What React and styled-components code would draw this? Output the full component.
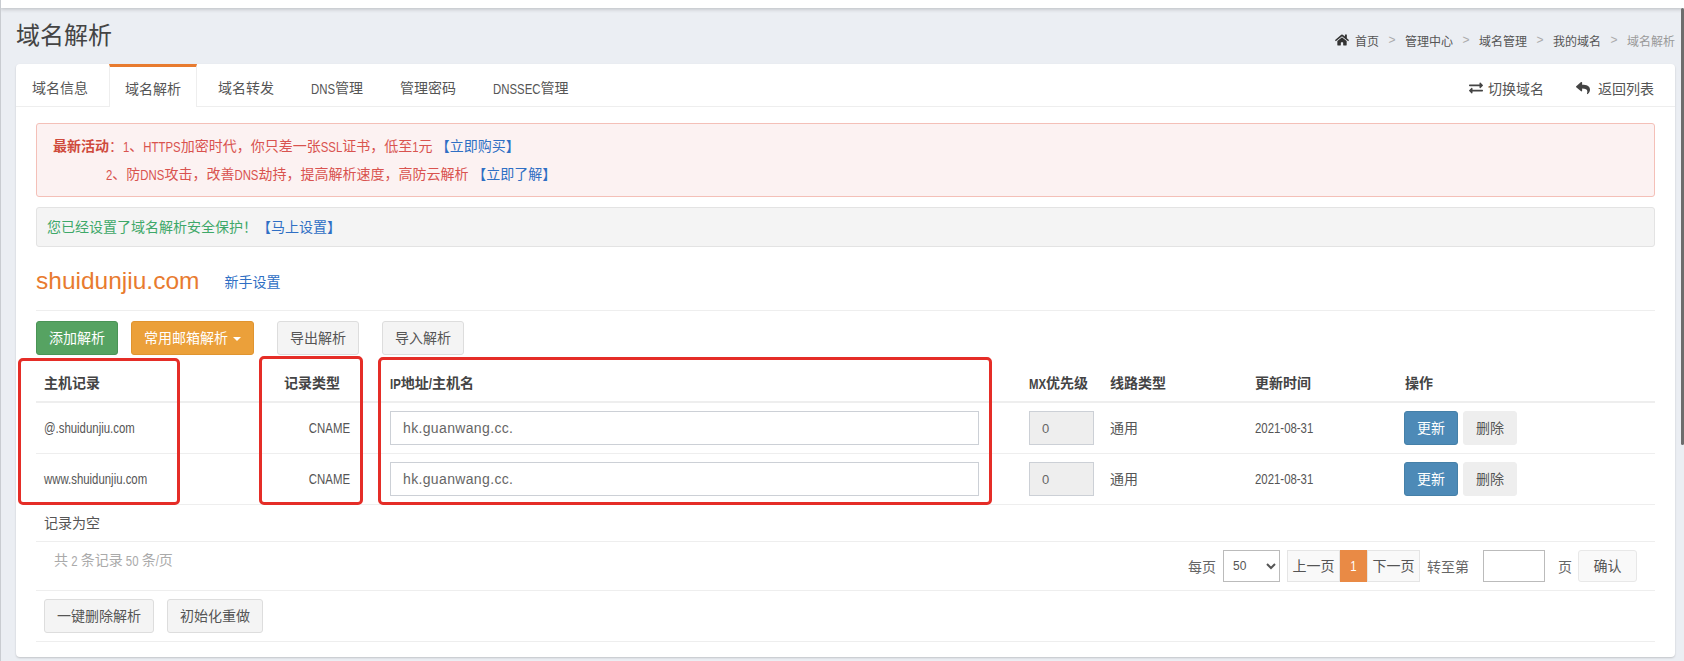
import React from 'react';
import styled, { createGlobalStyle } from 'styled-components';
import { FaHome, FaExchangeAlt, FaReply } from 'react-icons/fa';

const GlobalStyle = createGlobalStyle`
  html, body {
    margin: 0;
    padding: 0;
    height: 100%;
    overflow: hidden;
    background: #ebeef3;
    font-family: "Liberation Sans", "Noto Sans CJK SC", sans-serif;
    font-size: 14px;
    color: #555;
  }
  * { box-sizing: border-box; }
`;

const Page = styled.div`
  position: relative;
  width: 1684px;
  height: 661px;
  overflow: hidden;
  border-left: 1px solid #c9ccd1;
`;

const TopBar = styled.div`
  height: 8px;
  margin-left: -1px;
  background: #fff;
  box-shadow: 0 1px 4px rgba(0, 0, 0, 0.22);
`;

const Scrollbar = styled.div`
  position: absolute;
  top: 8px;
  right: 0;
  width: 3px;
  height: 437px;
  border-radius: 2px;
  background: #6d6d6d;
`;

const Header = styled.div`
  display: flex;
  justify-content: space-between;
  height: 56px;
  padding: 0 9px 0 15px;
`;

const Title = styled.h1`
  margin: 9px 0 0;
  font-size: 24px;
  line-height: 38px;
  font-weight: 400;
  color: #444;
`;

const Crumbs = styled.div`
  display: flex;
  align-items: center;
  height: 16px;
  margin: 24px 0 0;
  font-size: 12px;
  color: #555;

  svg {
    font-size: 14px;
    margin-right: 6px;
    color: #333;
  }
`;

const CrumbSep = styled.span`
  width: 26px;
  text-align: center;
  color: #aaa;
`;

const CrumbLast = styled.span`
  color: #999;
`;

const Card = styled.div`
  width: 1659px;
  height: 593px;
  margin-left: 15px;
  background: #fff;
  border-radius: 4px;
  box-shadow: 0 1px 2px rgba(0, 0, 0, 0.18);
`;

const TabBar = styled.div`
  display: flex;
  justify-content: space-between;
  height: 43px;
  border-bottom: 1px solid #eee;
`;

const TabList = styled.div`
  display: flex;
  gap: 5px;
`;

const Tab = styled.div`
  height: 43px;
  padding: 0 16px;
  line-height: ${({ $active }) => ($active ? '45px' : '48px')};
  color: #555;
  ${({ $active }) =>
    $active &&
    `
    background: #fff;
    border-top: 3px solid #e87b2f;
    border-left: 1px solid #eee;
    border-right: 1px solid #eee;
    padding: 0 15px;
  `}
`;

const TabTools = styled.div`
  display: flex;
  align-items: center;
  gap: 32px;
  padding: 5px 21px 0 0;
`;

const TabTool = styled.div`
  display: flex;
  align-items: center;
  gap: ${({ $gap }) => $gap}px;
  color: #555;

  svg {
    font-size: 14px;
    color: #444;
  }
`;

const Body = styled.div`
  padding: 16px 20px 0;
`;

const Narrow = styled.span`
  display: inline-block;
  font-size: 11.4px;
  line-height: 1;
  white-space: pre;
  transform: scaleY(1.23);
`;

const AlertRed = styled.div`
  height: 74px;
  padding: 8px 15px 0 16px;
  background: #fcf2f2;
  border: 1px solid #f4c0b8;
  border-radius: 3px;
  color: #d9534f;
  line-height: 28px;
`;

const AlertLine = styled.div`
  padding-left: ${({ $indent }) => $indent || 0}px;
`;

const Strong = styled.b`
  font-weight: 700;
  color: #cf4a3c;
`;

const Link = styled.a`
  color: #2f6fc4;
`;

const AlertGrey = styled.div`
  height: 40px;
  margin-top: 10px;
  padding: 0 10px;
  background: #f4f4f4;
  border: 1px solid #e3e3e3;
  border-radius: 3px;
  line-height: 38px;
  color: #3ea869;
`;

const DomainRow = styled.div`
  display: flex;
  align-items: center;
  gap: 25px;
  height: 64px;
  padding-top: 5px;
  border-bottom: 1px solid #eee;
`;

const Domain = styled.span`
  font-size: 24.5px;
  color: #e87b2f;
`;

const Toolbar = styled.div`
  display: flex;
  margin-top: 10px;
`;

const Button = styled.button`
  height: 34px;
  padding: 0 12px 2px;
  margin-right: ${({ $mr }) => $mr || 0}px;
  border: 1px solid ${({ $border }) => $border || '#ddd'};
  border-radius: 3px;
  background: ${({ $bg }) => $bg || '#f4f4f4'};
  color: ${({ $color }) => $color || '#555'};
  font: inherit;
`;

const Caret = styled.span`
  display: inline-block;
  margin-left: 5px;
  vertical-align: middle;
  border-top: 4px solid #fff;
  border-left: 4px solid transparent;
  border-right: 4px solid transparent;
`;

const TableWrap = styled.div`
  position: relative;
`;

const Mark = styled.div`
  position: absolute;
  top: ${({ $top }) => $top}px;
  left: ${({ $left }) => $left}px;
  width: ${({ $w }) => $w}px;
  height: ${({ $h }) => $h}px;
  border: 3px solid #e52d27;
  border-radius: 5px;
  pointer-events: none;
`;

const Table = styled.table`
  width: 1619px;
  table-layout: fixed;
  border-collapse: separate;
  border-spacing: 0;
`;

const Th = styled.th`
  height: 48px;
  padding: 7px ${({ $pr }) => $pr || 8}px 0 8px;
  border-bottom: 2px solid #eee;
  text-align: ${({ $right }) => ($right ? 'right' : 'left')};
  font-weight: 700;
  color: #444;
`;

const Td = styled.td`
  height: 51px;
  padding: 0 ${({ $pr }) => $pr || 8}px 2px 8px;
  border-bottom: 1px solid #eee;
  text-align: ${({ $right }) => ($right ? 'right' : 'left')};
  color: #555;
`;

const TextInput = styled.input`
  display: block;
  width: ${({ $w }) => $w}px;
  height: 34px;
  margin-top: 2px;
  padding: 0 12px;
  border: 1px solid #ccd0d6;
  background: ${({ $off }) => ($off ? '#eee' : '#fff')};
  color: #666;
  font: inherit;
  font-size: ${({ $fs }) => $fs || 14}px;
  letter-spacing: ${({ $ls }) => $ls || 0}px;
  outline: none;
`;

const ActionCell = styled.div`
  display: flex;
  gap: 5px;
  margin: 2px 0 0 -1px;
`;

const SmallButton = styled.button`
  width: ${({ $w }) => $w}px;
  height: 34px;
  padding: 0 0 2px;
  border: 1px solid ${({ $primary }) => ($primary ? '#4580a8' : '#eee')};
  border-radius: 3px;
  background: ${({ $primary }) => ($primary ? '#4d8ab7' : '#eee')};
  color: ${({ $primary }) => ($primary ? '#fff' : '#555')};
  font: inherit;
`;

const EmptyRow = styled.div`
  height: 37px;
  padding: 0 8px;
  border-bottom: 1px solid #eee;
  line-height: 36px;
  color: #555;
`;

const PagerRow = styled.div`
  display: flex;
  justify-content: space-between;
  height: 49px;
  padding: 8px 18px 0 18px;
  border-bottom: 1px solid #eee;
`;

const Total = styled.div`
  color: #aaa;
  line-height: 20px;
`;

const PagerTools = styled.div`
  display: flex;
  align-items: center;
  height: 32px;
  color: #666;
`;

const PageSize = styled.select`
  width: 57px;
  height: 32px;
  margin: 0 7px;
  padding-left: 5px;
  border: 1px solid #bbb;
  background: #fff;
  color: #555;
  font: inherit;
  font-size: 12px;
`;

const PageBtn = styled.div`
  width: ${({ $w }) => $w}px;
  height: 32px;
  border: ${({ $active }) => ($active ? 'none' : '1px solid #e5e5e5')};
  background: ${({ $active }) => ($active ? '#e98a45' : '#f9f9f9')};
  color: ${({ $active }) => ($active ? '#fff' : '#555')};
  text-align: center;
  line-height: 30px;
`;

const JumpLabel = styled.span`
  margin-left: ${({ $ml }) => $ml || 0}px;
`;

const JumpInput = styled.input`
  width: 62px;
  height: 32px;
  margin-left: 14px;
  border: 1px solid #bbb;
  background: #fff;
  outline: none;
`;

const Confirm = styled.div`
  width: 59px;
  height: 32px;
  margin-left: 6px;
  border: 1px solid #e8e8e8;
  border-radius: 3px;
  background: #f9f9f9;
  color: #555;
  text-align: center;
  line-height: 30px;
`;

const BottomRow = styled.div`
  display: flex;
  gap: 13px;
  height: 51px;
  padding: 8px 8px 0;
  border-bottom: 1px solid #eee;
`;

const records = ['@.shuidunjiu.com', 'www.shuidunjiu.com'];

const App = () => {
  return (
    <Page>
      <GlobalStyle />
      <TopBar />
      <Scrollbar />
      <Header>
        <Title>域名解析</Title>
        <Crumbs>
          <FaHome />
          首页
          <CrumbSep>&gt;</CrumbSep>
          管理中心
          <CrumbSep>&gt;</CrumbSep>
          域名管理
          <CrumbSep>&gt;</CrumbSep>
          我的域名
          <CrumbSep>&gt;</CrumbSep>
          <CrumbLast>域名解析</CrumbLast>
        </Crumbs>
      </Header>
      <Card>
        <TabBar>
          <TabList>
            <Tab>域名信息</Tab>
            <Tab $active>域名解析</Tab>
            <Tab>域名转发</Tab>
            <Tab><Narrow>DNS</Narrow>管理</Tab>
            <Tab>管理密码</Tab>
            <Tab><Narrow>DNSSEC</Narrow>管理</Tab>
          </TabList>
          <TabTools>
            <TabTool $gap={5}><FaExchangeAlt />切换域名</TabTool>
            <TabTool $gap={8}><FaReply />返回列表</TabTool>
          </TabTools>
        </TabBar>
        <Body>
          <AlertRed>
            <AlertLine>
              <Strong>最新活动</Strong>：<Narrow>1</Narrow>、<Narrow>HTTPS</Narrow>加密时代，你只差一张<Narrow>SSL</Narrow>证书，低至<Narrow>1</Narrow>元<Narrow> </Narrow><Link>【立即购买】</Link>
            </AlertLine>
            <AlertLine $indent={53}>
              <Narrow>2</Narrow>、防<Narrow>DNS</Narrow>攻击，改善<Narrow>DNS</Narrow>劫持，提高解析速度，高防云解析 <Link>【立即了解】</Link>
            </AlertLine>
          </AlertRed>
          <AlertGrey>
            您已经设置了域名解析安全保护！<Link>【马上设置】</Link>
          </AlertGrey>
          <DomainRow>
            <Domain>shuidunjiu.com</Domain>
            <Link>新手设置</Link>
          </DomainRow>
          <Toolbar>
            <Button $bg="#56a362" $border="#4a9456" $color="#fff" $mr={13}>添加解析</Button>
            <Button $bg="#eba03a" $border="#e0942f" $color="#fff" $mr={23}>常用邮箱解析<Caret /></Button>
            <Button $mr={23}>导出解析</Button>
            <Button>导入解析</Button>
          </Toolbar>
          <TableWrap>
            <Table>
              <colgroup>
                <col width="204" />
                <col width="142" />
                <col width="639" />
                <col width="81" />
                <col width="145" />
                <col width="150" />
                <col width="258" />
              </colgroup>
              <thead>
                <tr>
                  <Th>主机记录</Th>
                  <Th $right $pr={42}>记录类型</Th>
                  <Th><Narrow>IP</Narrow>地址<Narrow>/</Narrow>主机名</Th>
                  <Th><Narrow>MX</Narrow>优先级</Th>
                  <Th>线路类型</Th>
                  <Th>更新时间</Th>
                  <Th>操作</Th>
                </tr>
              </thead>
              <tbody>
                {records.map((host) => (
                  <tr key={host}>
                    <Td><Narrow>{host}</Narrow></Td>
                    <Td $right $pr={32}><Narrow>CNAME</Narrow></Td>
                    <Td><TextInput $w={589} $ls={0.35} readOnly value="hk.guanwang.cc." /></Td>
                    <Td><TextInput $w={65} $off $fs={13} readOnly value="0" /></Td>
                    <Td>通用</Td>
                    <Td><Narrow>2021-08-31</Narrow></Td>
                    <Td>
                      <ActionCell>
                        <SmallButton $w={54} $primary>更新</SmallButton>
                        <SmallButton $w={54}>删除</SmallButton>
                      </ActionCell>
                    </Td>
                  </tr>
                ))}
              </tbody>
            </Table>
            <Mark $left={-18} $top={3} $w={162} $h={147} />
            <Mark $left={223} $top={1} $w={104} $h={149} />
            <Mark $left={342} $top={2} $w={614} $h={148} />
          </TableWrap>
          <EmptyRow>记录为空</EmptyRow>
          <PagerRow>
            <Total>共<Narrow> 2 </Narrow>条记录<Narrow> 50 </Narrow>条<Narrow>/</Narrow>页</Total>
            <PagerTools>
              每页
              <PageSize defaultValue="50">
                <option value="50">50</option>
                <option value="100">100</option>
              </PageSize>
              <PageBtn $w={53}>上一页</PageBtn>
              <PageBtn $w={27} $active><Narrow>1</Narrow></PageBtn>
              <PageBtn $w={53}>下一页</PageBtn>
              <JumpLabel $ml={7}>转至第</JumpLabel>
              <JumpInput />
              <JumpLabel $ml={13}>页</JumpLabel>
              <Confirm>确认</Confirm>
            </PagerTools>
          </PagerRow>
          <BottomRow>
            <Button>一键删除解析</Button>
            <Button>初始化重做</Button>
          </BottomRow>
        </Body>
      </Card>
    </Page>
  );
};

export default App;
